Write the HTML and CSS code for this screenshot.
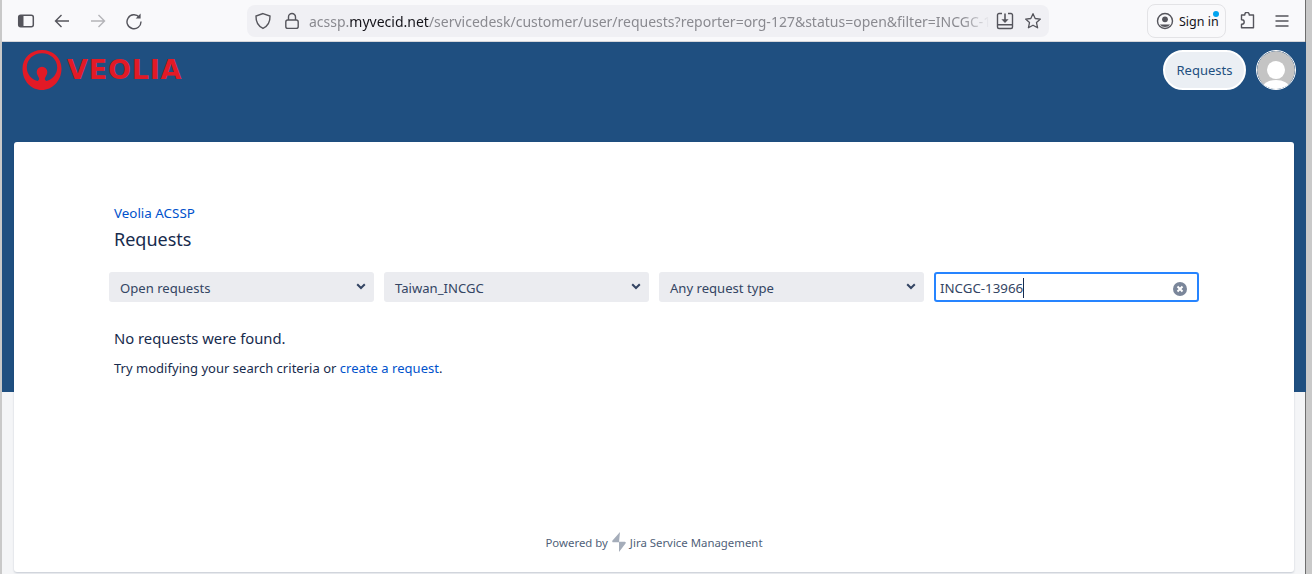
FILE: index.html
```html
<!DOCTYPE html>
<html lang="en">
<head>
<meta charset="utf-8">
<title>Requests</title>
<link rel="stylesheet" href="styles.css">
</head>
<body>
<div class="window">
  <div class="toolbar">
    <div class="nav-icons">
      <svg class="ico" viewBox="0 0 18 18"><rect x="1.7" y="3.2" width="14.6" height="11.6" rx="2" fill="none" stroke="#55555c" stroke-width="1.5"/><path d="M2 4h4.5v10H2z" fill="#55555c"/></svg>
      <svg class="ico" viewBox="0 0 18 18"><path d="M16 9H2.5M8.5 3 2.5 9l6 6" fill="none" stroke="#55555c" stroke-width="1.4"/></svg>
      <svg class="ico" viewBox="0 0 18 18"><path d="M2 9h13.5M9.5 3l6 6-6 6" fill="none" stroke="#b4b4b8" stroke-width="1.4"/></svg>
      <svg class="ico" viewBox="0 0 18 18"><path d="M14.3 5.2A7 7 0 1 0 16 9.6" fill="none" stroke="#55555c" stroke-width="1.4"/><path d="M15.6 1.6v4.9h-4.9z" fill="#55555c"/></svg>
    </div>
    <div class="urlbar">
      <svg class="ico shield" viewBox="0 0 18 18"><path d="M9 1.6 16 4c.2 5.500-1.800 9.900-7 12.400C3.800 13.900 1.800 9.500 2 4z" fill="none" stroke="#55555c" stroke-width="1.4"/></svg>
      <svg class="ico lock" viewBox="0 0 18 18"><rect x="2.800" y="8" width="12.400" height="8.400" rx="2" fill="none" stroke="#55555c" stroke-width="1.400"/><path d="M5.500 8V5a3.500 3.500 0 0 1 7 0v3" fill="none" stroke="#55555c" stroke-width="1.400"/></svg>
      <div class="url"><span>acssp.</span><b>myvecid.net</b><span>/servicedesk/customer/user/requests?reporter=org-127&amp;status=open&amp;filter=INCGC-1</span></div>
      <svg class="ico save" viewBox="0 0 18 18"><path d="M6 1.500H3a1.500 1.500 0 0 0-1.500 1.500v12A1.500 1.500 0 0 0 3 16.500h12a1.500 1.500 0 0 0 1.500-1.500V3A1.500 1.500 0 0 0 15 1.500h-3" fill="none" stroke="#55555c" stroke-width="1.400"/><path d="M1.500 12.700h15" stroke="#55555c" stroke-width="1.400"/><path d="M9 1.500v7.500" stroke="#55555c" stroke-width="1.600"/><path d="M5.400 7.300h7.200L9 11z" fill="#55555c"/></svg>
      <svg class="ico star" viewBox="0 0 18 18"><path d="m9 1.700 2.200 4.800 5.200.6-3.900 3.500 1.100 5.200L9 13.200l-4.600 2.600 1.100-5.200L1.600 7.100l5.200-.6z" fill="none" stroke="#55555c" stroke-width="1.300" stroke-linejoin="round"/></svg>
    </div>
    <div class="signin">
      <svg class="ico" viewBox="0 0 18 18"><circle cx="9" cy="9" r="7.500" fill="none" stroke="#55555c" stroke-width="1.400"/><circle cx="9" cy="7.300" r="2.900" fill="#55555c"/><path d="M3.800 12.500h10.400A6.500 6.500 0 0 1 3.800 12.500z" fill="#55555c"/></svg>
      <span>Sign in</span>
      <i class="dot"></i>
    </div>
    <svg class="ico puzzle" viewBox="0 0 18 18"><path d="M6.800 3.500V3a2.200 2.200 0 0 1 4.400 0v.5h4.300v12.800H3.500v-3.600H4a2.200 2.200 0 0 0 0-4.400h-.5V3.500z" transform="translate(0 -.500)" fill="none" stroke="#55555c" stroke-width="1.400" stroke-linejoin="round"/></svg>
    <svg class="ico menu" viewBox="0 0 18 18"><path d="M2.500 4h13M2.500 9h13M2.500 14h13" stroke="#55555c" stroke-width="1.300"/></svg>
  </div>

  <div class="page">
    <div class="hero">
      <div class="logo">
        <svg class="mark" viewBox="0 0 40 40"><path fill-rule="evenodd" fill="#e21a26" d="M20 0c11 0 19.500 8 19.500 18.500C39.500 31 30 40 20 40 9 40 .500 31 .500 18.500.500 8 9 0 20 0zm0 3.300C11.500 3.300 4.800 9.500 4.800 17.500 4.800 24 9.500 29.500 15.500 31c1.300-.700 2-1.700 1.500-3-1-2-2.300-3.700-2.300-6a5.300 5.300 0 0 1 10.600 0c0 2.300-1.300 4-2.300 6-.500 1.300.200 2.300 1.500 3 6-1.500 10.700-7 10.700-13.500C35.200 9.500 28.500 3.300 20 3.300z"/></svg>
        <span class="wordmark">VEOLIA</span>
      </div>
      <div class="hero-actions">
        <a class="pill">Requests</a>
        <div class="avatar"><svg viewBox="0 0 40 40"><circle cx="20" cy="20" r="20" fill="#c4c4c4"/><circle cx="20" cy="20" r="9.500" fill="#fff"/><ellipse cx="20" cy="39" rx="14" ry="8.500" fill="#fff"/></svg></div>
      </div>
    </div>
    <main class="card">
      <div class="content">
        <a class="crumb">Veolia ACSSP</a>
        <h1>Requests</h1>
        <div class="filters">
          <div class="select"><span>Open requests</span><svg viewBox="0 0 10 7"><path d="M1.200 1.200 5 5l3.800-3.800" fill="none" stroke="#344563" stroke-width="2"/></svg></div>
          <div class="select"><span>Taiwan_INCGC</span><svg viewBox="0 0 10 7"><path d="M1.200 1.200 5 5l3.800-3.800" fill="none" stroke="#344563" stroke-width="2"/></svg></div>
          <div class="select"><span>Any request type</span><svg viewBox="0 0 10 7"><path d="M1.200 1.200 5 5l3.800-3.800" fill="none" stroke="#344563" stroke-width="2"/></svg></div>
          <div class="search"><span class="typed">INCGC-13966</span><svg class="clear" viewBox="0 0 14 14"><circle cx="7" cy="7" r="7" fill="#7a869a"/><path d="M4.500 4.500l5 5M9.500 4.500l-5 5" stroke="#fff" stroke-width="2"/></svg></div>
        </div>
        <p class="none">No requests were found.</p>
        <p class="hint">Try modifying your search criteria or <a>create a request</a>.</p>
      </div>
      <footer class="powered">
        <span>Powered by</span>
        <svg viewBox="0 0 16 20"><path d="M9 0 1.500 8.500a1 1 0 0 0 .800 1.700H8zM8 20l6.500-8.500a1 1 0 0 0-.800-1.700H8z" fill="#a5adba"/></svg>
        <span>Jira Service Management</span>
      </footer>
    </main>
  </div>
</div>
</body>
</html>
```

FILE: styles.css
```css
* { box-sizing: border-box; }
html, body { margin: 0; height: 100%; overflow: hidden; }
body {
  background: #c9c9c9;
  font-family: "Noto Sans", "Open Sans", sans-serif;
  color: #172b4d;
  padding: 0 6px 0 2px;
}
.window {
  height: 574px;
  display: flex;
  flex-direction: column;
  border-right: 1px solid #6e6e6e;
  padding-top: 2px;
  background: #f9f9fb;
}
.toolbar {
  height: 40px;
  flex: none;
  background: #f9f9fb;
  display: flex;
  align-items: center;
  padding: 0 0 1px 15px;
  border-bottom: 1px solid #d6d6da;
}
.ico { width: 18px; height: 18px; flex: none; display: block; }
.nav-icons { display: flex; gap: 18px; width: 230px; }
.urlbar {
  width: 802px;
  height: 32px;
  background: #f0f0f4;
  border-radius: 8px;
  display: flex;
  align-items: center;
  padding: 0 7px 0 7px;
  overflow: hidden;
}
.lock { margin-left: 11px; }
.url {
  flex: 1;
  margin-left: 8px;
  font-size: 14px;
  white-space: nowrap;
  overflow: hidden;
  color: #8a8a90;
  -webkit-mask-image: linear-gradient(to right, #000 calc(100% - 32px), transparent calc(100% - 4px));
  mask-image: linear-gradient(to right, #000 calc(100% - 32px), transparent calc(100% - 4px));
}
.url b { font-weight: 400; color: #15141a; }
.save { margin-left: 2px; }
.star { margin-left: 10px; }
.signin {
  position: relative;
  margin-left: 98px;
  width: 79px;
  height: 34px;
  border: 1px solid #e3e3e6;
  border-radius: 8px;
  display: flex;
  align-items: center;
  gap: 5px;
  padding-left: 8px;
  font-size: 12.500px;
  color: #15141a;
  white-space: nowrap;
}
.dot {
  position: absolute;
  top: 6px;
  right: 6px;
  width: 6px;
  height: 6px;
  border-radius: 50%;
  background: #00a4f0;
}
.puzzle { margin-left: 12px; }
.menu { margin-left: 17px; }
.page {
  flex: 1;
  display: grid;
  grid-template-rows: 350px 1fr;
  background: #f4f5f7;
  min-height: 0;
}
.hero {
  grid-area: 1 / 1;
  background: #1f4f80;
  display: flex;
  justify-content: space-between;
  align-items: flex-start;
  padding: 8px 10px 0 20px;
}
.logo { display: flex; align-items: center; gap: 5px; height: 40px; }
.mark { width: 40px; height: 40px; flex: none; }
.wordmark {
  font-family: "DejaVu Sans", sans-serif;
  font-weight: 700;
  font-size: 27px;
  line-height: 40px;
  color: #e21a26;
  letter-spacing: 0.8px;
}
.hero-actions { display: flex; align-items: center; gap: 10px; }
.pill {
  width: 83px;
  height: 40px;
  border: 2px solid #fff;
  border-radius: 20px;
  background: #ebeff4;
  color: #1f4f80;
  font-size: 13px;
  display: flex;
  align-items: center;
  justify-content: center;
}
.avatar { width: 40px; height: 40px; border-radius: 50%; overflow: hidden; border: 1px solid #fff; }
.avatar svg { display: block; width: 100%; height: 100%; }
.card {
  grid-area: 1 / 1 / 3 / 1;
  margin: 100px 12px 2px;
  background: #fff;
  border-radius: 3px;
  box-shadow: 0 1px 2px rgba(9, 30, 66, 0.2);
  display: flex;
  flex-direction: column;
  justify-content: space-between;
  z-index: 1;
}
.content { padding: 62px 95px 0; }
.crumb { display: block; font-size: 13.400px; line-height: 18px; color: #0052cc; margin-left: 5px; }
h1 { margin: 3px 0 0 5px; font-size: 18px; line-height: 28px; font-weight: 400; color: #172b4d; }
.filters { display: flex; gap: 10px; margin-top: 19px; }
.select, .search {
  width: 265px;
  height: 30px;
  border-radius: 3px;
  display: flex;
  align-items: center;
  justify-content: space-between;
  font-size: 13.100px;
  color: #344563;
  padding-top: 1px;
}
.select { background: #ebecf0; padding: 1px 8px 0 11px; }
.select svg { width: 10px; height: 7px; margin-top: -2px; }
.search { border: 2px solid #2684ff; background: #fff; padding: 1px 10px 0 4px; color: #344563; font-size: 13.300px; }
.typed { border-right: 1px solid #172b4d; line-height: 20px; }
.clear { width: 14px; height: 14px; margin-top: 2px; }
.none { margin: 26px 0 0 5px; font-size: 14.800px; line-height: 20px; }
.hint { margin: 10px 0 0 5px; font-size: 13px; line-height: 20px; letter-spacing: 0.02px; }
.hint a { color: #0052cc; }
.powered {
  display: flex;
  justify-content: center;
  align-items: center;
  gap: 3px;
  height: 20px;
  margin-bottom: 20px;
  font-size: 11.400px;
  color: #505f79;
}
.powered svg { width: 16px; height: 20px; }
```
